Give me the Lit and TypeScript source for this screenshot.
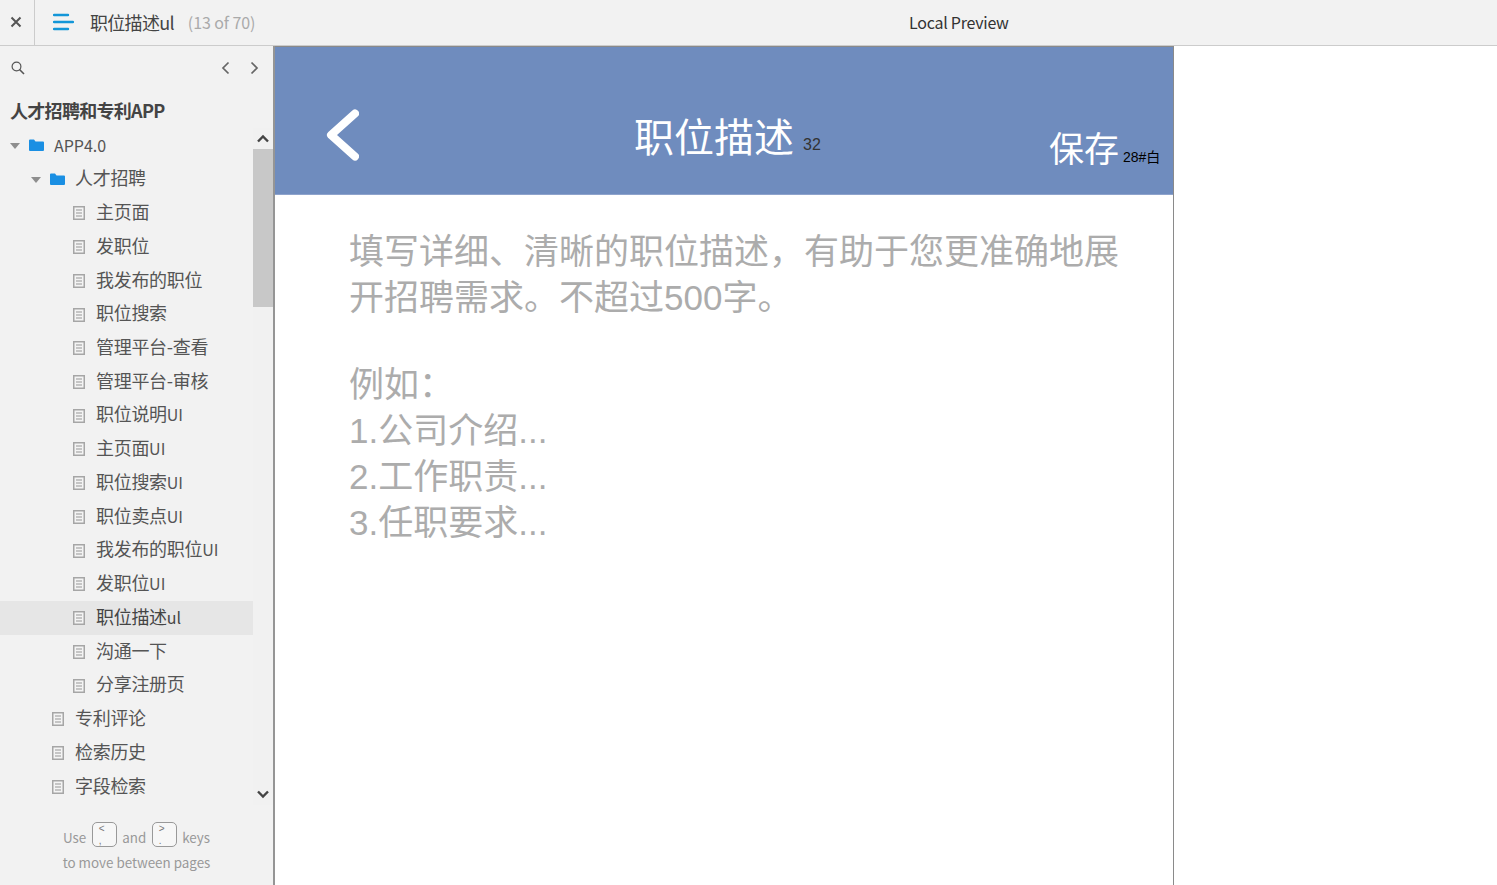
import { LitElement, html, css, svg } from 'lit';
import { customElement, state } from 'lit/decorators.js';

interface TreeRow {
    label: string;
    depth: number;
    folder?: boolean;
    selected?: boolean;
}

const rows: TreeRow[] = [
    { label: 'APP4.0', depth: 0, folder: true },
    { label: '人才招聘', depth: 1, folder: true },
    { label: '主页面', depth: 2 },
    { label: '发职位', depth: 2 },
    { label: '我发布的职位', depth: 2 },
    { label: '职位搜索', depth: 2 },
    { label: '管理平台-查看', depth: 2 },
    { label: '管理平台-审核', depth: 2 },
    { label: '职位说明UI', depth: 2 },
    { label: '主页面UI', depth: 2 },
    { label: '职位搜索UI', depth: 2 },
    { label: '职位卖点UI', depth: 2 },
    { label: '我发布的职位UI', depth: 2 },
    { label: '发职位UI', depth: 2 },
    { label: '职位描述ul', depth: 2, selected: true },
    { label: '沟通一下', depth: 2 },
    { label: '分享注册页', depth: 2 },
    { label: '专利评论', depth: 1 },
    { label: '检索历史', depth: 1 },
    { label: '字段检索', depth: 1 },
];

const pageIcon = svg`<rect x="0.75" y="0.75" width="10.5" height="12.5" fill="#f4f4f4" stroke="#a6a6a6" stroke-width="1.5"/><path d="M3 4h6M3 7h6M3 10h6" stroke="#969696" fill="none"/>`;
const folderIcon = svg`<path d="M0 1.5a1 1 0 0 1 1-1h4l1.5 2H14a1 1 0 0 1 1 1V11a1 1 0 0 1-1 1H1a1 1 0 0 1-1-1z" fill="#1a8fe3"/>`;

@customElement('app-root')
export class AppRoot extends LitElement {
    @state()
    pageTitle = '职位描述ul';

    static styles = css`
    :host{
        display: block;
        width: 1497px;
        height: 885px;
        overflow: hidden;
        background: #fff;
        color: #444;
        font-family: "Noto Sans CJK SC", "Noto Sans", sans-serif;
    }
    .top{
        position: relative;
        display: flex;
        align-items: center;
        height: 45px;
        background: #f2f2f2;
        border-bottom: 1px solid #ccc;
    }
    .close{
        display: flex;
        align-items: center;
        justify-content: center;
        width: 35px;
        height: 45px;
        padding: 0 3px 2px 0;
        box-sizing: border-box;
        border-right: 1px solid #ccc;
        flex: none;
    }
    .burger{
        margin: 0 16px 1px 18px;
        display: block;
    }
    .page-name{
        font-size: 18px;
        letter-spacing: -0.7px;
        color: #444;
        margin-bottom: 2px;
    }
    .count{
        margin-left: 14px;
        margin-bottom: 2px;
        font-size: 16px;
        letter-spacing: -0.1px;
        color: #aaa;
    }
    .preview{
        position: absolute;
        left: 909px;
        top: 11px;
        font-size: 16px;
        letter-spacing: -0.25px;
        line-height: 22px;
        color: #333;
    }
    .body{
        display: flex;
        height: 839px;
    }
    .side{
        flex: none;
        width: 273px;
        display: flex;
        flex-direction: column;
        background: #f2f2f2;
        border-right: 2px solid #959595;
    }
    .tools{
        display: flex;
        align-items: center;
        height: 44px;
        padding: 0 12px 0 11px;
        gap: 15px;
    }
    .tools .search{
        margin-right: auto;
    }
    .project{
        height: 38px;
        line-height: 40px;
        padding-left: 10px;
        font-size: 18px;
        font-weight: 700;
        letter-spacing: -0.7px;
        color: #444;
        white-space: nowrap;
    }
    .tree-wrap{
        display: flex;
        height: 677px;
    }
    .tree{
        width: 253px;
        height: 676px;
        padding-top: 1px;
        overflow: hidden;
    }
    .row{
        display: flex;
        align-items: center;
        height: 33.74px;
        font-size: 18px;
        letter-spacing: -0.3px;
        color: #555;
        white-space: nowrap;
    }
    .row.selected{
        background: #e6e6e6;
        color: #444;
    }
    .row.depth-0{
        font-size: 16px;
        letter-spacing: 0;
    }
    .arrow{
        width: 0;
        height: 0;
        flex: none;
        border-left: 5px solid transparent;
        border-right: 5px solid transparent;
        border-top: 6px solid #8e8e8e;
        margin-right: 9px;
    }
    .ico{
        flex: none;
        display: block;
    }
    .label{
        flex: none;
        padding-bottom: 4.5px;
    }
    .depth-0 .label{
        padding-bottom: 2px;
    }
    .latin{
        font-size: 16px;
        letter-spacing: 0;
    }
    .scroll{
        width: 20px;
        height: 677px;
        display: flex;
        flex-direction: column;
        background: #f1f1f1;
    }
    .scroll .btn{
        display: flex;
        align-items: center;
        justify-content: center;
        height: 21px;
        background: #f1f1f1;
    }
    .thumb{
        height: 158px;
        background: #c8c8c8;
    }
    .track{
        flex: 1;
        background: #f1f1f1;
    }
    .hint{
        text-align: center;
        font-size: 13.4px;
        color: #999;
        padding-top: 16px;
    }
    .hint .line{
        display: flex;
        align-items: center;
        justify-content: center;
        height: 27px;
        gap: 5.5px;
    }
    .hint .word{
        padding-top: 4px;
    }
    .hint .line2{
        height: 24px;
        line-height: 24px;
        padding-top: 2px;
    }
    .key{
        display: inline-flex;
        flex-direction: column;
        width: 25px;
        height: 25px;
        box-sizing: border-box;
        padding: 0 0 0 6px;
        border: 1px solid #999;
        border-radius: 5px;
        font-family: "Liberation Sans", sans-serif;
        font-size: 10px;
        line-height: 11.5px;
        color: #777;
        text-align: left;
        background: #f7f7f7;
    }
    .main{
        flex: 1;
        background: #fff;
        min-width: 0;
    }
    .phone{
        width: 898px;
        height: 839px;
        background: #fff;
        border-right: 1px solid #8a8a8a;
        font-family: "Liberation Sans", "Noto Sans CJK SC", sans-serif;
    }
    .bar{
        position: relative;
        height: 147px;
        background: #6f8cbe;
        border-top: 1px solid #8a8a8a;
        border-bottom: 1px solid #8ea3cc;
    }
    .back{
        position: absolute;
        left: 50px;
        top: 62px;
    }
    .bar-title{
        position: absolute;
        left: 359px;
        top: 65px;
        font-size: 40px;
        line-height: 52px;
        color: #fff;
        white-space: nowrap;
    }
    .bar-size{
        position: absolute;
        left: 528px;
        top: 87px;
        font-size: 16px;
        line-height: 22px;
        color: #333;
    }
    .bar-save{
        position: absolute;
        left: 774px;
        top: 79px;
        font-size: 35px;
        line-height: 48px;
        color: #fff;
    }
    .bar-note{
        position: absolute;
        left: 848px;
        top: 101px;
        font-size: 14px;
        line-height: 18px;
        color: #000;
    }
    .placeholder{
        padding: 34px 50px 0 74px;
        font-size: 35px;
        line-height: 46px;
        color: #acacac;
    }
    .placeholder .intro{
        margin-bottom: 41px;
    }
    `;

    // the trailing UI/ul in the tree sits a bit smaller than the chinese part
    private _label(r: TreeRow) {
        const m = r.depth === 2 ? r.label.match(/^(.*?)([A-Za-z]+)$/) : null;
        return m ? html`${m[1]}<span class="latin">${m[2]}</span>` : r.label;
    }

    private _row(r: TreeRow) {
        const left = [10, 31, 52][r.depth];
        return html`
        <div class="row depth-${r.depth} ${r.selected ? 'selected' : ''}" style="padding-left:${r.folder ? left : left + 21}px">
            ${r.folder
                ? html`<span class="arrow"></span><svg class="ico" width="15" height="13" viewBox="0 0 15 13">${folderIcon}</svg>`
                : html`<svg class="ico" width="12" height="14" viewBox="0 0 12 14">${pageIcon}</svg>`}
            <span class="label" style="margin-left:${r.folder ? 10 : 11}px">${this._label(r)}</span>
        </div>`;
    }

    render() {
        return html`
        <div class="top">
            <div class="close">
                <svg width="12" height="12" viewBox="0 0 12 12"><path d="M1.5 1.5l9 9M10.5 1.5l-9 9" stroke="#555" stroke-width="2" fill="none"/></svg>
            </div>
            <svg class="burger" width="21" height="18" viewBox="0 0 21 18">
                <path d="M1 2h14M1 9h19M1 16h14" stroke="#1396d8" stroke-width="2.4" stroke-linecap="round" fill="none"/>
            </svg>
            <span class="page-name">${this.pageTitle}</span>
            <span class="count">(13 of 70)</span>
            <span class="preview">Local Preview</span>
        </div>
        <div class="body">
            <div class="side">
                <div class="tools">
                    <svg class="search" width="14" height="14" viewBox="0 0 14 14">
                        <circle cx="5.5" cy="5.5" r="4.4" stroke="#555" stroke-width="1.2" fill="none"/>
                        <path d="M8.5 8.5l4.5 4.5" stroke="#555" stroke-width="1.6" fill="none"/>
                    </svg>
                    <svg width="14" height="14" viewBox="0 0 14 14"><path d="M10.5 1.5L5 7l5.5 5.5" stroke="#666" stroke-width="1.7" fill="none"/></svg>
                    <svg width="14" height="14" viewBox="0 0 14 14"><path d="M4.5 1.5L10 7l-5.5 5.5" stroke="#666" stroke-width="1.7" fill="none"/></svg>
                </div>
                <div class="project">人才招聘和专利APP</div>
                <div class="tree-wrap">
                    <div class="tree">${rows.map((r) => this._row(r))}</div>
                    <div class="scroll">
                        <div class="btn"><svg width="14" height="9" viewBox="0 0 14 9"><path d="M2 7.5L7 2.5l5 5" stroke="#444" stroke-width="2.4" fill="none"/></svg></div>
                        <div class="thumb"></div>
                        <div class="track"></div>
                        <div class="btn"><svg width="14" height="9" viewBox="0 0 14 9"><path d="M2 1.5L7 6.5l5-5" stroke="#444" stroke-width="2.4" fill="none"/></svg></div>
                    </div>
                </div>
                <div class="hint">
                    <div class="line">
                        <span class="word">Use</span>
                        <span class="key"><span>&lt;</span><span>,</span></span>
                        <span class="word">and</span>
                        <span class="key"><span>&gt;</span><span>.</span></span>
                        <span class="word">keys</span>
                    </div>
                    <div class="line2">to move between pages</div>
                </div>
            </div>
            <div class="main">
                <div class="phone">
                    <div class="bar">
                        <svg class="back" width="34" height="52" viewBox="0 0 34 52">
                            <path d="M30 4.5L6 26l24 21.5" stroke="#fff" stroke-width="8" stroke-linecap="round" stroke-linejoin="round" fill="none"/>
                        </svg>
                        <span class="bar-title">职位描述</span>
                        <span class="bar-size">32</span>
                        <span class="bar-save">保存</span>
                        <span class="bar-note">28#白</span>
                    </div>
                    <div class="placeholder">
                        <div class="intro">填写详细、清晰的职位描述，有助于您更准确地展开招聘需求。不超过500字。</div>
                        <div>例如：</div>
                        <div>1.公司介绍...</div>
                        <div>2.工作职责...</div>
                        <div>3.任职要求...</div>
                    </div>
                </div>
            </div>
        </div>`;
    }
}
